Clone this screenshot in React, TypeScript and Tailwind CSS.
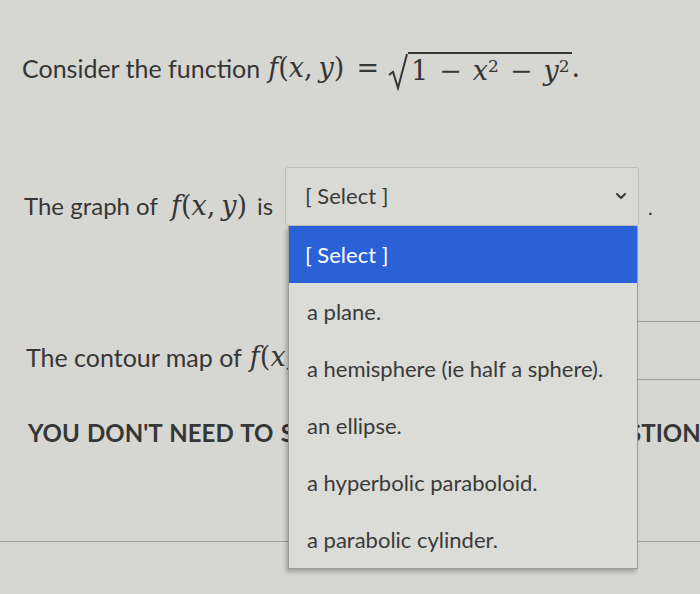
import React from 'react';
import { ChevronDown } from 'lucide-react';

const options = [
  'a plane.',
  'a hemisphere (ie half a sphere).',
  'an ellipse.',
  'a hyperbolic paraboloid.',
  'a parabolic cylinder.',
];

// f(x, y) typeset in a serif face, like the rendered math on the page
function Fxy() {
  return (
    <span className="font-['DejaVu_Serif',serif] text-[27px] whitespace-nowrap">
      <i>f</i>(<i>x</i>,<span className="ml-[6px]" /><i>y</i>)
    </span>
  );
}

function Formula() {
  return (
    <span className="inline-flex items-center font-['DejaVu_Serif',serif] text-[27px] whitespace-nowrap">
      <Fxy />
      <span className="ml-[12px] mr-[9px]">=</span>
      <svg width="20" height="38" viewBox="0 0 20 38" className="mt-[8px]">
        <path d="M1 22 L5 19 L10 35 L19 1" fill="none" stroke="#363636" strokeWidth="2" />
      </svg>
      <span className="border-t-[2px] border-[#363636] pl-[3px] pr-[2px] leading-[33px] mt-[3px]">
        1<span className="mx-[11px]">−</span>
        <i>x</i>
        <sup className="text-[17px]">2</sup>
        <span className="mx-[11px]">−</span>
        <i>y</i>
        <sup className="text-[17px]">2</sup>
      </span>
      <span>.</span>
    </span>
  );
}

export default function App() {
  return (
    <div className="w-[700px] h-[594px] overflow-hidden relative bg-[#d6d7d2] text-[#363636] font-['Lato',sans-serif]">
      <div className="pt-[50px] pl-[22px]">
        <div className="h-[36px] flex items-center text-[25px] leading-[36px] whitespace-nowrap">
          <span className="mr-[8px]">Consider the function</span>
          <Formula />
        </div>

        {/* first question: open select */}
        <div className="mt-[81px] flex items-start whitespace-nowrap">
          <div className="mt-[21px] w-[263px] pl-[2px] h-[36px] flex items-center text-[24px] leading-[36px]">
            <span className="mr-[13px]">The graph of</span>
            <Fxy />
            <span className="ml-[10px]">is</span>
          </div>
          <div className="relative w-[354px] h-[59px] border border-[#bdbdb8] rounded-[3px] bg-[#d9dad5]">
            <div className="h-full flex items-center justify-between pl-[19px] pr-[9px] pb-[2px]">
              <span className="text-[22px] text-[#3a3a3a]">[ Select ]</span>
              <ChevronDown size={16} strokeWidth={3} className="text-[#3a3a3a]" />
            </div>
            <div className="absolute z-10 top-[58px] left-[2px] w-[350px] bg-[#dbdbd7] border border-[#9c9c98] border-t-0 shadow-[-2px_3px_4px_rgba(0,0,0,0.25)]">
              <div className="h-[57px] flex items-center pl-[16px] bg-[#2b61d6] text-white text-[22px]">[ Select ]</div>
              {options.map((o) => (
                <div key={o} className="h-[57px] flex items-center pl-[18px] text-[22px] text-[#3a3a3a]">
                  {o}
                </div>
              ))}
            </div>
          </div>
          <div className="mt-[30px] ml-[9px] text-[20px] leading-[20px]">.</div>
        </div>

        {/* second question: closed select behind the list */}
        <div className="mt-[95px] flex items-start whitespace-nowrap">
          <div className="mt-[18px] pl-[4px] h-[36px] flex items-center text-[25px] leading-[36px]">
            <span className="mr-[8px]">The contour map of</span>
            <Fxy />
            <span className="ml-[8px]">is</span>
          </div>
          <div className="ml-[6px] w-[400px] h-[59px] border-y border-[#9c9c98]" />
        </div>

        <div className="mt-[35px] pl-[6px] h-[36px] flex items-center text-[24px] font-bold leading-[36px] whitespace-nowrap [word-spacing:1.5px]">
          YOU DON'T NEED TO SUBMIT WORK FOR THIS QUESTION
        </div>
      </div>
      <div className="mt-[90px] border-t border-[#9c9c98]" />
    </div>
  );
}
